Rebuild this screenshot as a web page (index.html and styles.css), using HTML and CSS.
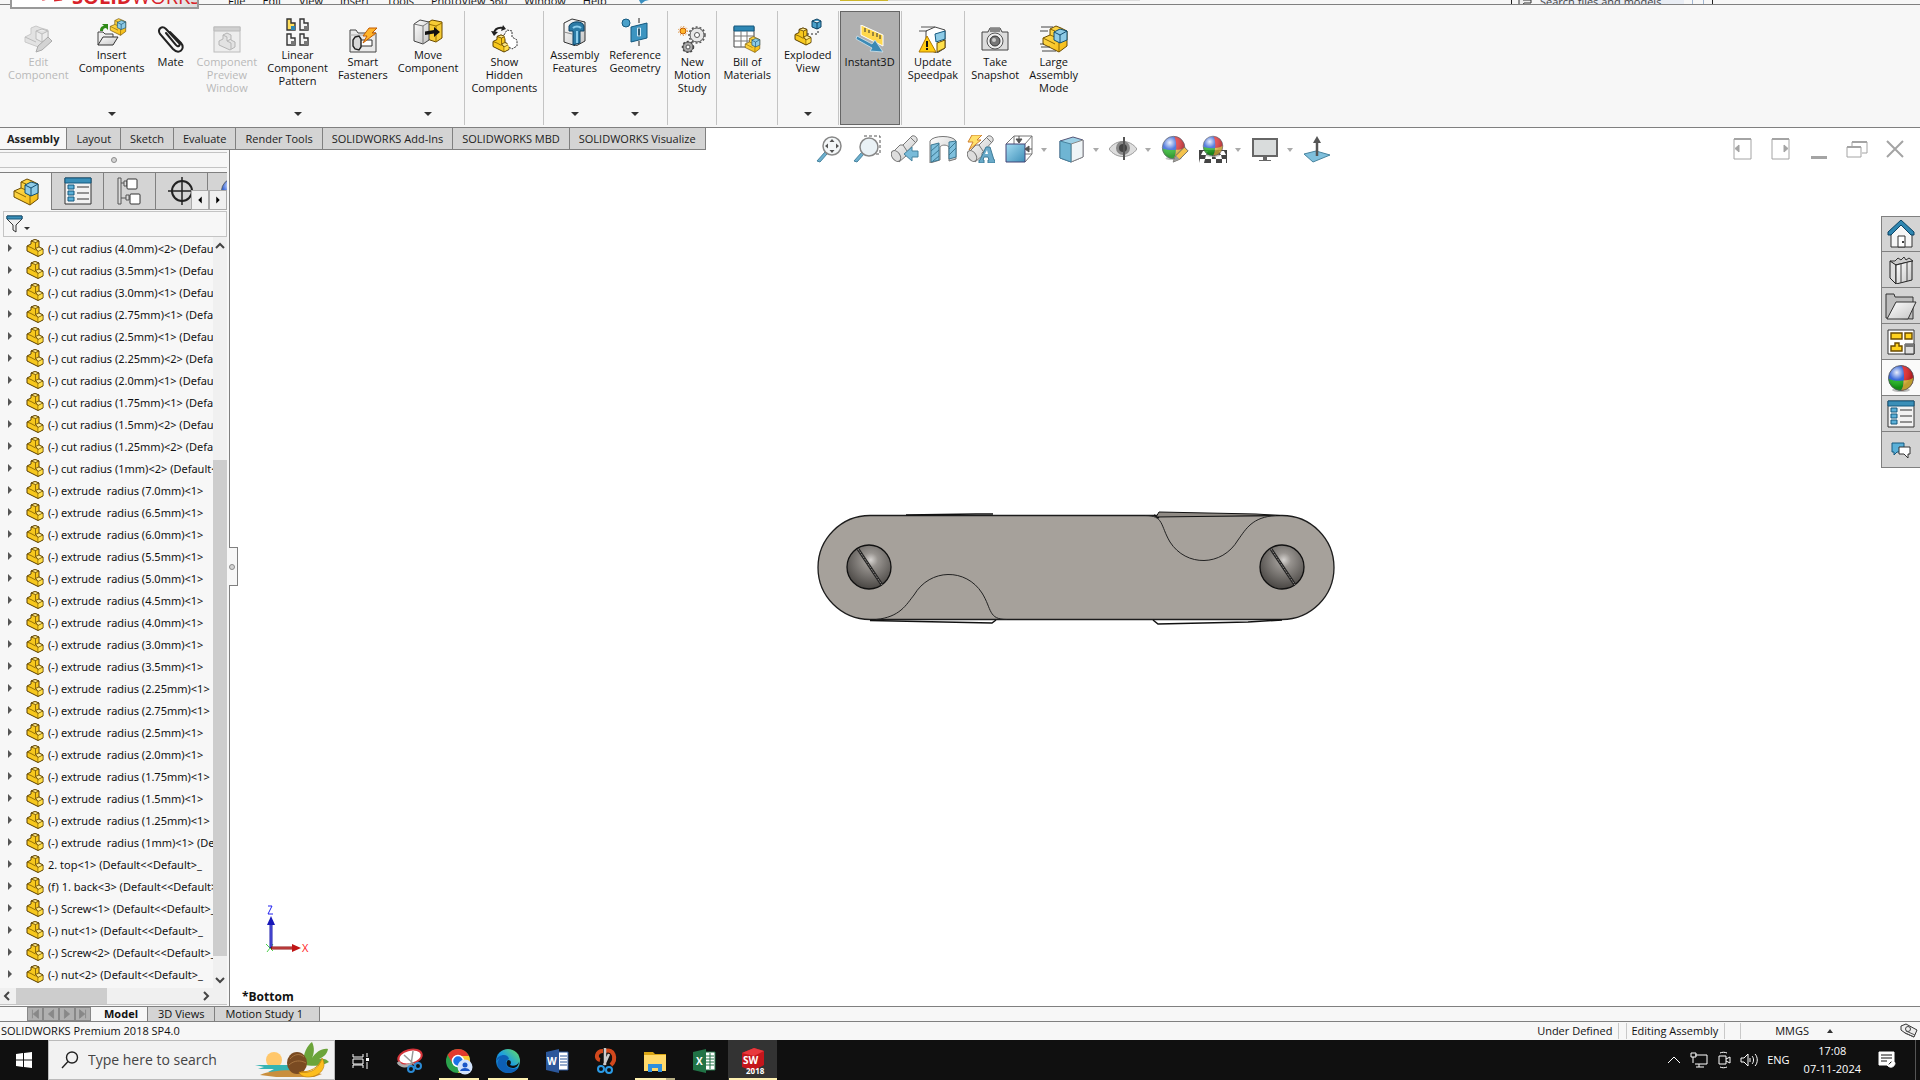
FILE: index.html
```html
<!DOCTYPE html>
<html lang="en">
<head>
<meta charset="utf-8">
<title>SOLIDWORKS Premium 2018</title>
<link rel="stylesheet" href="styles.css">
</head>
<body>
<svg class="defs" aria-hidden="true">
  <defs>
    <linearGradient id="gy" x1="0" y1="0" x2="1" y2="1"><stop offset="0" stop-color="#ffe05a"/><stop offset="1" stop-color="#f5b90f"/></linearGradient>
    <linearGradient id="gb" x1="0" y1="0" x2="1" y2="1"><stop offset="0" stop-color="#a5dcf2"/><stop offset="1" stop-color="#3d8fb8"/></linearGradient>
    <linearGradient id="gg" x1="0" y1="0" x2="1" y2="1"><stop offset="0" stop-color="#fff"/><stop offset="1" stop-color="#c4c4c4"/></linearGradient>
    <radialGradient id="gs" cx=".54" cy=".34" r=".65"><stop offset="0" stop-color="#d6d3d0"/><stop offset=".25" stop-color="#97938f"/><stop offset="1" stop-color="#4b4845"/></radialGradient>
    <radialGradient id="gl" cx=".33" cy=".28" r=".6"><stop offset="0" stop-color="#fff" stop-opacity=".9"/><stop offset=".5" stop-color="#fff" stop-opacity=".1"/><stop offset="1" stop-color="#000" stop-opacity=".2"/></radialGradient>
    <linearGradient id="ge" x1="0" y1="1" x2="1" y2="0"><stop offset="0" stop-color="#0c59a4"/><stop offset=".5" stop-color="#1b9de2"/><stop offset="1" stop-color="#6be35a"/></linearGradient>
  </defs>
  <symbol id="part" viewBox="0 0 18 18">
    <path d="M1 7l4-2V2l4-1.500L13 2v6l4 2v5l-5 2.500L1 12z" fill="#f7c81e" stroke="#5a3f00" stroke-linejoin="round"/>
    <path d="M5 2l4-1.500L13 2 9.500 3.500zM9.500 9.500L13 8l4 2-5 2.500z" fill="#ffe98a" stroke="#5a3f00" stroke-width=".8"/>
    <path d="M9.500 3.500v6L12 12.500v5M1 7l4 1.500L9.500 11" fill="none" stroke="#7a5800" stroke-width=".8"/>
    <path d="M12.500 12.800L16.500 10.800v3.800l-4 2z" fill="#ffdf4d"/>
  </symbol>
  <symbol id="asm" viewBox="0 0 28 28">
    <path d="M2 13l7-3V4l6-3 5 2 6 3v15l-8 6L2 19z" fill="url(#gy)" stroke="#6b4b00"/>
    <path d="M9 4l5 2v6l-5-2M2 13l12 6M18 17v10" fill="none" stroke="#8a6500"/>
    <path d="M13 7l6-3 7 2v9l-7 3-6-3z" fill="#8ecbe6" stroke="#124e70"/>
    <path d="M13 7l6 3 7-4M19 10v8" fill="none" stroke="#124e70"/>
  </symbol>
  <symbol id="edit" viewBox="0 0 28 28">
    <path d="M1 12l6-3V3l5-2 5 2 7 2v12l-7 6L1 17z" fill="#e2e2e2" stroke="#c9c9c9"/>
    <path d="M12 6l6-2 6 2v8l-6 3-6-3zM12 6l6 3 6-3M18 9v8M1 12l11 5" fill="#ececec" stroke="#bcbcbc"/>
    <path d="M12 27l2-6 10-9 4 4-10 9z" fill="#d3d3d3" stroke="#aaa"/>
  </symbol>
  <symbol id="insert" viewBox="0 0 30 28">
    <path d="M1 27V14h5l2 2h8v3" fill="#eee" stroke="#444"/><path d="M1 27l5-8h15l-5 8z" fill="url(#gg)" stroke="#333"/>
    <path d="M3 13c0-4 2-5 4-5L5 6h6v6L9 10c-2 0-3 1-3 3z" fill="#2f8a18"/>
    <use href="#asm" x="12" y="0" width="18" height="18"/>
  </symbol>
  <symbol id="clip" viewBox="0 0 28 28">
    <path d="M9 8l10 12c2 3 5 0 3-2L9 4C5 0 0 4 3 9l13 15c6 6 13 0 8-6L13 7" fill="none" stroke="#222" stroke-width="2" stroke-linecap="round"/>
  </symbol>
  <symbol id="preview" viewBox="0 0 28 28">
    <rect x="1" y="2" width="26" height="25" fill="#ededed" stroke="#bcbcbc"/><path d="M1 2h26v4H1z" fill="#d0d0d0" stroke="#bcbcbc"/>
    <path d="M6 16l4-2v-4l4-2 4 2v5l4 2v5l-5 3-11-5zM10 10l4 2v4l4-2M14 16l4 2v6" fill="#e2e2e2" stroke="#b5b5b5"/>
  </symbol>
  <symbol id="pattern" viewBox="0 0 28 28">
    <g stroke="#333" stroke-width="1.400"><path d="M3 1h4v4h4v7H3z" fill="#ffdf5e"/><path d="M16 1h4v4h4v7h-8zM3 16h4v4h4v7H3zM16 16h4v4h4v7h-8z" fill="#f4f4f4"/></g>
    <path d="M7 8h4v4H7z" fill="#2e87b4"/><path d="M20 8h4v4h-4zM7 23h4v4H7zM20 23h4v4h-4z" fill="#777"/>
  </symbol>
  <symbol id="smart" viewBox="0 0 28 28">
    <path d="M1 27V5h6l2 3h18v19z" fill="#e9e9e9" stroke="#444"/><path d="M1 10h26" stroke="#aaa"/>
    <path d="M9 15h14v6H9z" fill="#fff" stroke="#333"/><path d="M6 12l4-1 2 3v8l-2 3-4-1-2-3v-6z" fill="#d8d8d8" stroke="#222" stroke-width="1.400"/>
    <path d="M20 3h8l-5 5h4L14 18l4-7h-4z" fill="#ffb52a" stroke="#c35a00"/>
  </symbol>
  <symbol id="move" viewBox="0 0 28 28">
    <path d="M13 5l5-3 10 2v16l-6 4-9-3z" fill="#f6cc35" stroke="#6b4b00"/><path d="M14 6l8 2 6-3M22 8v16" fill="none" stroke="#9a7300"/>
    <path d="M0 6l6-4 9 2v18l-6 4-9-3z" fill="url(#gg)" stroke="#444"/><path d="M0 6l9 2 6-4M9 8v18" fill="none" stroke="#777"/>
    <path d="M11 13.500l9-1.500V9l6 5-6 5v-3.500l-9 1.500z" fill="#111"/>
  </symbol>
  <symbol id="hidden" viewBox="0 0 28 28">
    <use href="#part" x="2" y="9" width="18" height="19"/>
    <path d="M14 10l3-5 5 1v6l5 3v6l-5 3-3-2" fill="#fff" stroke="#333" stroke-dasharray="2 1"/>
    <path d="M4 8c1-5 5-6 10-5" fill="none" stroke="#222" stroke-width="2"/><path d="M1 6l7 1-4 4zM13 0l3 4-5 2z" fill="#222"/>
  </symbol>
  <symbol id="feature" viewBox="0 0 28 28">
    <path d="M3 5l8-4 13 3v19l-9 5-12-4z" fill="url(#gg)" stroke="#333"/>
    <path d="M8 8c3-6 14-5 15 0v5h-4v12l-7 2V13H8z" fill="#2c7ba6" stroke="#0c4364"/><path d="M12 10c2-2 6-2 8 0M16 13v12" stroke="#8bcdec" fill="none" stroke-width="2"/><path d="M3 14l8 2" stroke="#888"/>
  </symbol>
  <symbol id="refgeo" viewBox="0 0 28 28">
    <circle cx="5" cy="5" r="4" fill="#4aa0c9" stroke="#14597f"/><path d="M10 9l16-4v15l-16 4z" fill="#3c94c0" stroke="#14597f"/>
    <path d="M18 0v5M18 9v10M18 23v5" stroke="#222"/><path d="M16.500 10h3v8h-3z" fill="none" stroke="#cceafa"/>
  </symbol>
  <symbol id="motion" viewBox="0 0 28 28">
    <circle cx="5" cy="6" r="3" fill="#ffb52a" stroke="#c35a00"/><circle cx="5" cy="6" r="4.500" fill="none" stroke="#d97a10" stroke-dasharray="1 2"/>
    <g fill="#e6e6e6" stroke="#555"><circle cx="19" cy="10" r="7"/><circle cx="19" cy="10" r="2.500" fill="#fff"/><circle cx="10" cy="22" r="5" fill="#aaa"/><circle cx="10" cy="22" r="2" fill="#fff"/></g>
    <circle cx="19" cy="10" r="8" fill="none" stroke="#555" stroke-width="1.500" stroke-dasharray="2 2"/><circle cx="10" cy="22" r="5.500" fill="none" stroke="#444" stroke-width="1.500" stroke-dasharray="2 2"/>
  </symbol>
  <symbol id="bom" viewBox="0 0 28 28">
    <path d="M1 2h20v20H1z" fill="#fff" stroke="#444"/><path d="M1 1h20v5H1z" fill="#2e87b4" stroke="#14597f"/><path d="M1 11h20M1 16h20M8 6v16M14 6v16" stroke="#777"/>
    <use href="#asm" x="11" y="11" width="17" height="17"/>
  </symbol>
  <symbol id="explode" viewBox="0 0 28 28">
    <use href="#part" x="0" y="9" width="18" height="19"/><path d="M13 16h11V9" fill="none" stroke="#222" stroke-dasharray="2 2"/>
    <path d="M18 3l5-2 4 2v6l-4 2-5-2zM18 3l5 2 4-2M23 5v6" fill="#4aa0c9" stroke="#0c4364"/>
  </symbol>
  <symbol id="instant" viewBox="0 0 28 28">
    <path d="M5 0l22 10v11L5 10z" fill="#ffd84c" stroke="#fff"/><path d="M9 3v4M13 5v3M17 7v4M21 8v4M24 10v4" stroke="#333"/>
    <path d="M1 11l15 8 3-4 8 12-13-1 2-3L0 14z" fill="#3c8ab5" stroke="#cfe4ef" stroke-width=".8"/>
  </symbol>
  <symbol id="speed" viewBox="0 0 28 28">
    <path d="M7 6l9-4 10 3v18l-8 5-11-4z" fill="#fff" stroke="#444"/><path d="M16 9l10-3v8l-9 3z" fill="#8ecbe6" stroke="#14597f"/><path d="M18 18l8-3v8l-8 4z" fill="#ffe04a" stroke="#6b4b00"/>
    <path d="M2 2h14M0 6h8" stroke="#555"/><path d="M8 11l9 16H0z" fill="#ffcc10" stroke="#b07800"/><path d="M8 16v6M8 23v2" stroke="#111" stroke-width="2"/>
  </symbol>
  <symbol id="camera" viewBox="0 0 28 28">
    <path d="M1 7h6l2-4h10l2 4h6v18H1z" fill="#ddd" stroke="#444" stroke-linejoin="round"/><path d="M9 3h10v4H9z" fill="#888"/>
    <circle cx="14" cy="16" r="8" fill="#eee" stroke="#555"/><circle cx="14" cy="16" r="5" fill="#777" stroke="#333"/><circle cx="13" cy="15" r="2" fill="#ccc"/>
  </symbol>
  <symbol id="large" viewBox="0 0 28 28">
    <use href="#asm" x="1" y="0" width="28" height="28"/><path d="M1 2h12M0 6h8M0 19h4M1 22h9M2 26h14" stroke="#444"/>
  </symbol>
  <symbol id="zoomfit" viewBox="0 0 28 28">
    <path d="M2 26l8-9 2 2-7 8z" fill="#6db1d0" stroke="#47839e"/><circle cx="17" cy="11" r="9" fill="#f4f7f8" stroke="#888" stroke-width="1.500"/><path d="M17 4l2.500 3h-5zM17 18l2.500-3h-5zM10 11l3-2.500v5zM24 11l-3-2.500v5z" fill="#555"/>
  </symbol>
  <symbol id="zoomarea" viewBox="0 0 28 28">
    <path d="M11 1h16v18h-8" fill="none" stroke="#555" stroke-dasharray="3 2"/><path d="M1 26l8-9 2 2-7 8z" fill="#6db1d0" stroke="#47839e"/><circle cx="16" cy="12" r="9" fill="#eaf2f6" stroke="#888" stroke-width="1.500"/>
  </symbol>
  <symbol id="scope" viewBox="0 0 28 28"><path d="M1 18l8-8 3 0 9-9c3-1 6 2 5 5L15 18v3l-7 6z" fill="url(#gg)" stroke="#777"/><ellipse cx="5" cy="21" rx="4" ry="6" fill="#ddd" stroke="#777" transform="rotate(-35 5 21)"/><path d="M12 10l4 6M20 3l5 5" stroke="#777"/></symbol>
  <symbol id="prev" viewBox="0 0 28 28"><use href="#scope"/><path d="M27 16v6h-6v4l-8-7 8-7v4z" fill="#79bbd9" stroke="#47839e"/></symbol>
  <symbol id="section" viewBox="0 0 28 28">
    <path d="M1 6c3-6 23-6 26 0v18l-7 2V12c-3-3-8-2-9 0v13l-10 3z" fill="url(#gg)" stroke="#777"/><path d="M2 10l8-2v17l-8 2zM20 7l7-1v16l-7 2z" fill="#7fc0dd" stroke="#3c7893"/><path d="M2 16l8-7M2 22l8-7M4 26l6-5M20 14l7-7M20 20l7-7" stroke="#3c7893"/>
  </symbol>
  <symbol id="anno" viewBox="0 0 28 28"><use href="#scope"/><path d="M5 0h10l-5 5h4L2 15l4-8H1z" fill="#ffe06a" stroke="#d08030"/><path d="M19 12h4l4 13h1v3h-7v-3h1l-1-3h-4l-1 3h1v3h-5v-3h1z" fill="#69aac9" stroke="#3f7c98"/><path d="M20 15l1 4h-3z" fill="#fff"/></symbol>
  <symbol id="orient" viewBox="0 0 28 28"><path d="M1 9l8-8h18v18l-7 8M9 1v8M27 1l-7 8M20 19h7" fill="none" stroke="#777"/><path d="M1 9h19v18H1z" fill="url(#gb)" stroke="#447"/><path d="M14 1v6M11 4l3 4 3-4zM27 14h-5M24 11l-4 3 4 3z" stroke="#555" fill="#555"/></symbol>
  <symbol id="cube" viewBox="0 0 28 28"><path d="M3 6l13-4 10 3v17l-12 5-11-4z" fill="#9cd0e6" stroke="#557"/><path d="M14 9l12-4v17l-12 5z" fill="#eef4f7" stroke="#888"/><path d="M3 6l11 3v18l-11-4z" fill="#6fb5d3" stroke="#47839e"/></symbol>
  <symbol id="eye" viewBox="0 0 28 28"><path d="M0 14C7 4 21 4 28 14 21 24 7 24 0 14z" fill="#ddd" stroke="#999"/><circle cx="14" cy="13" r="7" fill="#888"/><circle cx="14" cy="13" r="4" fill="#444"/><path d="M15 2v23" stroke="#555" stroke-width="2"/></symbol>
  <symbol id="ball" viewBox="0 0 28 28"><ellipse cx="14" cy="26" rx="9" ry="2" fill="#bbb"/><circle cx="14" cy="14" r="12.500" fill="#2458d6"/><path d="M14 1.500c4 2 4 22 0 25A12.500 12.500 0 0 0 26.500 14 12.500 12.500 0 0 0 14 1.500z" fill="#e0262a"/><path d="M1.500 15c6 2 10 2 15 1.500 0 5-1 8-3 10C7 26 2 22 1.500 15z" fill="#18b118"/><path d="M16.500 16.500c4 0 8-1 10-3 0 7-5 13-12.500 13 2-3 2.500-6 2.500-10z" fill="#eec43a"/><circle cx="14" cy="14" r="12.500" fill="url(#gl)" stroke="#555" stroke-width=".8"/></symbol>
  <symbol id="appear" viewBox="0 0 30 30"><use href="#ball" width="27" height="27" opacity=".85"/><path d="M13 29l3-7 9-9 4 4-9 9z" fill="#f4c34d" stroke="#666"/><path d="M13 29l3-7 4 4z" fill="#999"/></symbol>
  <symbol id="scene" viewBox="0 0 28 28"><path d="M0 15h28v13H0z" fill="#444"/><path d="M4 16h5l-2 4H2zM20 16h5l2 4h-5zM7 20h6v4H6zM16 20h6l1 4h-6zM1 24h5l-1 4H0zM12 24h5v4h-5zM23 24h4v4h-4z" fill="#fff"/><use href="#ball" x="3" y="0" width="22" height="22" opacity=".85"/></symbol>
  <symbol id="monitor" viewBox="0 0 28 28"><path d="M2 4h24v17H2z" fill="#d9dcdc" stroke="#666" stroke-width="2"/><path d="M12 21h4v4h4v1H8v-1h4z" fill="#666"/></symbol>
  <symbol id="normal" viewBox="0 0 28 28"><path d="M1 19l12-3 14 4-17 7z" fill="#7fc0dd" stroke="#47839e"/><path d="M14 21V7" stroke="#555" stroke-width="2.500"/><path d="M14 1l4 7h-8z" fill="#555"/></symbol>
  <symbol id="list" viewBox="0 0 28 28"><path d="M1 1h26v26H1z" fill="#f2f2f2" stroke="#333"/><path d="M1 1h26v5H1z" fill="#3a8fb8" stroke="#14597f"/><path d="M4 8h6v4H4zM4 14h6v4H4zM4 20h6v4H4z" fill="#5ab0d8" stroke="#14597f"/><path d="M13 10h12M13 16h12M13 22h12" stroke="#333"/></symbol>
  <symbol id="config" viewBox="0 0 28 28"><path d="M2 1h3v26H2zM5 6h6M5 21h8" fill="#ddd" stroke="#555"/><path d="M8 4h3v5H8zM10 18h3v5h-3z" fill="#ddd" stroke="#555"/><rect x="11" y="2" width="10" height="10" rx="1" fill="#fff" stroke="#333"/><rect x="14" y="17" width="10" height="10" rx="1" fill="#fff" stroke="#333"/></symbol>
  <symbol id="target" viewBox="0 0 28 28"><circle cx="14" cy="14" r="10" fill="none" stroke="#222" stroke-width="2"/><path d="M14 0v28M0 14h28" stroke="#222" stroke-width="1.500"/></symbol>
  <symbol id="house" viewBox="0 0 28 28"><path d="M4 13L14 4l11 9v14H4z" fill="#f6f6f6" stroke="#333"/><path d="M11 16h7v11h-7z" fill="#fff" stroke="#333"/><path d="M1 15v-3L14 0l13 12v3h-3L14 5 4 15z" fill="#2f86b0" stroke="#0c4364"/><circle cx="16" cy="22" r="1"/></symbol>
  <symbol id="books" viewBox="0 0 28 28"><path d="M3 5l5 4 18-4-4-3-3 2-2-3-3 3-3-2-3 3z" fill="#ccc" stroke="#333"/><path d="M3 5l6 4v19l-6-6z" fill="#ddd" stroke="#222"/><path d="M9 9l16-4v19L9 28z" fill="url(#gg)" stroke="#222"/><path d="M14 8v19M20 6v19" stroke="#444"/></symbol>
  <symbol id="folder" viewBox="0 0 32 28"><path d="M1 26V2h8l1 3h18v22z" fill="#bdbdbd" stroke="#333"/><path d="M2 27l9-17h20l-8 17z" fill="url(#gg)" stroke="#333"/></symbol>
  <symbol id="palette" viewBox="0 0 28 28"><path d="M1 2h26v24H1z" fill="#fff" stroke="#333"/><path d="M4 5h11v6H4zM18 5h7v6h-7zM4 23v-5h4v-3h4v3h3v5z" fill="#ffd21f" stroke="#6b4b00" stroke-width="1.400"/><path d="M18 16h9v10h-9z" fill="#ddd" stroke="#333"/><path d="M18 16h9v3h-9z" fill="#777"/></symbol>
  <symbol id="chat" viewBox="0 0 28 28"><path d="M5 7h12v9h-7l-3 3v-3H5z" fill="#5ab0d8" stroke="#14597f"/><path d="M12 11h11v7h-2v4l-4-4h-5z" fill="#fff" stroke="#333"/></symbol>
  <symbol id="snip" viewBox="0 0 28 28"><ellipse cx="14" cy="10" rx="12" ry="7" fill="#fff" stroke="#d6343a" stroke-width="2" transform="rotate(-15 14 10)"/><path d="M2 15c3 5 9 5 13 2" fill="none" stroke="#aaa" stroke-width="3"/><path d="M8 8l11 10M17 4l-2 14" stroke="#999" stroke-width="1.500"/><circle cx="15" cy="22" r="3" fill="none" stroke="#2b8bd6" stroke-width="2"/><circle cx="22" cy="19" r="3" fill="none" stroke="#2b8bd6" stroke-width="2"/></symbol>
</svg>

<header class="topbar">
  <div class="brand"><svg width="24" height="12" viewBox="0 0 24 12"><path d="M0 6c4 0 7-2 8-6M12 0c8 2 8 6 0 7l8-1" fill="none" stroke="#d8232a" stroke-width="3"/></svg><span><b>SOLID</b>WORKS</span></div>
  <nav class="menu"><a href="#">File</a><a href="#">Edit</a><a href="#">View</a><a href="#">Insert</a><a href="#">Tools</a><a href="#">PhotoView 360</a><a href="#">Window</a><a href="#">Help</a><svg width="12" height="10" viewBox="0 0 12 10"><path d="M1 6h10L7 7l-4 3z" fill="#3a8fc0"/></svg></nav>
  <div class="progress"><i></i></div>
  <div class="filesearch"><svg width="14" height="8" viewBox="0 0 14 8"><path d="M1 0v7h3l2-3h7V1H5" fill="#eee" stroke="#333"/></svg><input aria-label="Search files and models" placeholder="Search files and models"><i></i></div>
</header>

<section class="ribbon" aria-label="Assembly commands">
  <button class="cmd off" disabled><svg><use href="#edit"/></svg><span>Edit<br>Component</span></button>
  <button class="cmd drop"><svg><use href="#insert"/></svg><span>Insert<br>Components</span></button>
  <button class="cmd"><svg><use href="#clip"/></svg><span>Mate</span></button>
  <button class="cmd off" disabled><svg><use href="#preview"/></svg><span>Component<br>Preview<br>Window</span></button>
  <button class="cmd drop"><svg><use href="#pattern"/></svg><span>Linear<br>Component<br>Pattern</span></button>
  <button class="cmd"><svg><use href="#smart"/></svg><span>Smart<br>Fasteners</span></button>
  <button class="cmd drop"><svg><use href="#move"/></svg><span>Move<br>Component</span></button>
  <i class="sep"></i>
  <button class="cmd"><svg><use href="#hidden"/></svg><span>Show<br>Hidden<br>Components</span></button>
  <i class="sep"></i>
  <button class="cmd drop"><svg><use href="#feature"/></svg><span>Assembly<br>Features</span></button>
  <button class="cmd drop"><svg><use href="#refgeo"/></svg><span>Reference<br>Geometry</span></button>
  <i class="sep"></i>
  <button class="cmd"><svg><use href="#motion"/></svg><span>New<br>Motion<br>Study</span></button>
  <i class="sep"></i>
  <button class="cmd"><svg><use href="#bom"/></svg><span>Bill of<br>Materials</span></button>
  <i class="sep"></i>
  <button class="cmd drop"><svg><use href="#explode"/></svg><span>Exploded<br>View</span></button>
  <i class="sep"></i>
  <button class="cmd on" aria-pressed="true"><svg><use href="#instant"/></svg><span>Instant3D</span></button>
  <i class="sep"></i>
  <button class="cmd"><svg><use href="#speed"/></svg><span>Update<br>Speedpak</span></button>
  <i class="sep"></i>
  <button class="cmd"><svg><use href="#camera"/></svg><span>Take<br>Snapshot</span></button>
  <button class="cmd"><svg><use href="#large"/></svg><span>Large<br>Assembly<br>Mode</span></button>
</section>

<main class="work">
  <nav class="tabs"><a class="cur" href="#">Assembly</a><a href="#">Layout</a><a href="#">Sketch</a><a href="#">Evaluate</a><a href="#">Render Tools</a><a href="#">SOLIDWORKS Add-Ins</a><a href="#">SOLIDWORKS MBD</a><a href="#">SOLIDWORKS Visualize</a></nav>

  <aside class="panel">
    <div class="grip"><i class="dot"></i></div>
    <div class="ptabs">
      <button class="cur" aria-label="Feature tree"><svg><use href="#asm"/></svg></button><button aria-label="Properties"><svg><use href="#list"/></svg></button><button aria-label="Configurations"><svg><use href="#config"/></svg></button><button aria-label="Dimensions"><svg><use href="#target"/></svg></button><button aria-label="Display"><svg><use href="#ball"/></svg></button>
      <div class="pscroll"><button aria-label="Previous tab"><svg viewBox="0 0 18 18"><path d="M11 5v8L7 9z"/></svg></button><button aria-label="Next tab"><svg viewBox="0 0 18 18"><path d="M7 5v8l4-4z"/></svg></button></div>
    </div>
    <button class="filter" aria-label="Filter tree"><svg width="24" height="18" viewBox="0 0 24 18"><path d="M1 1h15v3l-6 6v7l-3-2v-5L1 4z" fill="#eee" stroke="#333"/><path d="M1 1h15v3H1z" fill="#3a8fb8" stroke="#14597f"/><path d="M18 12h6l-3 3z" fill="#333"/></svg></button>
    <div class="treebox">
      <ul class="tree">
        <li><svg><use href="#part"/></svg>(-) cut radius (4.0mm)&lt;2&gt; (Default&lt;&lt;Default&gt;_</li>
        <li><svg><use href="#part"/></svg>(-) cut radius (3.5mm)&lt;1&gt; (Default&lt;&lt;Default&gt;_</li>
        <li><svg><use href="#part"/></svg>(-) cut radius (3.0mm)&lt;1&gt; (Default&lt;&lt;Default&gt;_</li>
        <li><svg><use href="#part"/></svg>(-) cut radius (2.75mm)&lt;1&gt; (Default&lt;&lt;Default&gt;_</li>
        <li><svg><use href="#part"/></svg>(-) cut radius (2.5mm)&lt;1&gt; (Default&lt;&lt;Default&gt;_</li>
        <li><svg><use href="#part"/></svg>(-) cut radius (2.25mm)&lt;2&gt; (Default&lt;&lt;Default&gt;_</li>
        <li><svg><use href="#part"/></svg>(-) cut radius (2.0mm)&lt;1&gt; (Default&lt;&lt;Default&gt;_</li>
        <li><svg><use href="#part"/></svg>(-) cut radius (1.75mm)&lt;1&gt; (Default&lt;&lt;Default&gt;_</li>
        <li><svg><use href="#part"/></svg>(-) cut radius (1.5mm)&lt;2&gt; (Default&lt;&lt;Default&gt;_</li>
        <li><svg><use href="#part"/></svg>(-) cut radius (1.25mm)&lt;2&gt; (Default&lt;&lt;Default&gt;_</li>
        <li><svg><use href="#part"/></svg>(-) cut radius (1mm)&lt;2&gt; (Default&lt;&lt;Default&gt;_</li>
        <li><svg><use href="#part"/></svg>(-) extrude  radius (7.0mm)&lt;1&gt;</li>
        <li><svg><use href="#part"/></svg>(-) extrude  radius (6.5mm)&lt;1&gt;</li>
        <li><svg><use href="#part"/></svg>(-) extrude  radius (6.0mm)&lt;1&gt;</li>
        <li><svg><use href="#part"/></svg>(-) extrude  radius (5.5mm)&lt;1&gt;</li>
        <li><svg><use href="#part"/></svg>(-) extrude  radius (5.0mm)&lt;1&gt;</li>
        <li><svg><use href="#part"/></svg>(-) extrude  radius (4.5mm)&lt;1&gt;</li>
        <li><svg><use href="#part"/></svg>(-) extrude  radius (4.0mm)&lt;1&gt;</li>
        <li><svg><use href="#part"/></svg>(-) extrude  radius (3.0mm)&lt;1&gt;</li>
        <li><svg><use href="#part"/></svg>(-) extrude  radius (3.5mm)&lt;1&gt;</li>
        <li><svg><use href="#part"/></svg>(-) extrude  radius (2.25mm)&lt;1&gt;</li>
        <li><svg><use href="#part"/></svg>(-) extrude  radius (2.75mm)&lt;1&gt;</li>
        <li><svg><use href="#part"/></svg>(-) extrude  radius (2.5mm)&lt;1&gt;</li>
        <li><svg><use href="#part"/></svg>(-) extrude  radius (2.0mm)&lt;1&gt;</li>
        <li><svg><use href="#part"/></svg>(-) extrude  radius (1.75mm)&lt;1&gt;</li>
        <li><svg><use href="#part"/></svg>(-) extrude  radius (1.5mm)&lt;1&gt;</li>
        <li><svg><use href="#part"/></svg>(-) extrude  radius (1.25mm)&lt;1&gt;</li>
        <li><svg><use href="#part"/></svg>(-) extrude  radius (1mm)&lt;1&gt; (Default</li>
        <li><svg><use href="#part"/></svg>2. top&lt;1&gt; (Default&lt;&lt;Default&gt;_</li>
        <li><svg><use href="#part"/></svg>(f) 1. back&lt;3&gt; (Default&lt;&lt;Default&gt;_</li>
        <li><svg><use href="#part"/></svg>(-) Screw&lt;1&gt; (Default&lt;&lt;Default&gt;_</li>
        <li><svg><use href="#part"/></svg>(-) nut&lt;1&gt; (Default&lt;&lt;Default&gt;_</li>
        <li><svg><use href="#part"/></svg>(-) Screw&lt;2&gt; (Default&lt;&lt;Default&gt;_</li>
        <li><svg><use href="#part"/></svg>(-) nut&lt;2&gt; (Default&lt;&lt;Default&gt;_</li>
      </ul>
      <div class="vbar"><svg viewBox="0 0 14 16"><path d="M3 11l4-4 4 4" /></svg><i class="before"></i><i class="thumb"></i><i class="after"></i><svg viewBox="0 0 14 16"><path d="M3 6l4 4 4-4"/></svg></div>
    </div>
    <div class="hbar"><svg viewBox="0 0 16 16"><path d="M9 4L5 8l4 4"/></svg><i class="thumb"></i><svg class="end" viewBox="0 0 16 16"><path d="M7 4l4 4-4 4"/></svg></div>
  </aside>

  <section class="view" aria-label="Graphics area">
    <svg class="model" width="520" height="112" viewBox="0 0 520 112">
      <path d="M54 4.500H466a52 52 0 0 1 0 104H54a52 52 0 0 1 0-104z" fill="#a6a19b" stroke="#1c1c1c" stroke-width="1.300"/>
      <path d="M90 4l70-1h17M338 4l5 3M54 109.500l122 2.500 4-3M337 109l5 4 90-2 34-2" fill="none" stroke="#111" stroke-width="1.500"/><path d="M340 6l3-5L440 3l24 1.500z" fill="#8f8a84" stroke="#111"/>
      <path d="M60 108.500C84 106 90 94 98 84c16-27 52-27 68-2 10 16 6 26.500 25 26.500M329 4.500c19 0 15 9.500 25 26.500 16 25 52 25 68-2C430 18 436 6 460 4.500" fill="none" stroke="#222"/>
      <g id="screw"><circle cx="53" cy="56" r="22" fill="url(#gs)" stroke="#111" stroke-width="1.300"/><path d="M42 38l24 36" stroke="#222" stroke-width="3"/><path d="M42 38l24 36" stroke="#8a8683" stroke-dasharray="2 1"/></g>
      <use href="#screw" x="413"/>
    </svg>

    <div class="headsup">
      <button aria-label="Zoom to fit"><svg><use href="#zoomfit"/></svg></button><button aria-label="Zoom to area"><svg><use href="#zoomarea"/></svg></button><button aria-label="Previous view"><svg><use href="#prev"/></svg></button><button aria-label="Section view"><svg><use href="#section"/></svg></button><button aria-label="Annotation views"><svg><use href="#anno"/></svg></button><button class="more" aria-label="View orientation"><svg><use href="#orient"/></svg></button><button class="more" aria-label="Display style"><svg><use href="#cube"/></svg></button><button class="more" aria-label="Hide or show items"><svg><use href="#eye"/></svg></button><button aria-label="Edit appearance"><svg><use href="#appear"/></svg></button><button class="more" aria-label="Apply scene"><svg><use href="#scene"/></svg></button><button class="more" aria-label="View settings"><svg><use href="#monitor"/></svg></button><button aria-label="Normal to"><svg><use href="#normal"/></svg></button>
    </div>

    <div class="winctl">
      <button aria-label="Collapse left"><svg viewBox="0 0 22 24"><path d="M2 2h17v20H2z"/><path d="M2 2h17" stroke-width="2"/><path d="M7 8v7l-4-3.500z" fill="#a4a4a4"/></svg></button>
      <button aria-label="Collapse right"><svg viewBox="0 0 22 24"><path d="M2 2h17v20H2z"/><path d="M2 2h17" stroke-width="2"/><path d="M14 8v7l4-3.500z" fill="#a4a4a4"/></svg></button>
      <button aria-label="Minimize"><svg viewBox="0 0 22 24"><path d="M3 20.500h16" stroke-width="3"/></svg></button>
      <button aria-label="Restore"><svg viewBox="0 0 22 24"><path d="M1 10h14v10H1zM6 9V5h15v11h-5" /><path d="M1 10h14M6 5h15" stroke-width="2"/></svg></button>
      <button aria-label="Close"><svg viewBox="0 0 22 24"><path d="M3 4l16 16M19 4L3 20" stroke-width="2"/></svg></button>
    </div>

    <div class="taskpane">
      <button aria-label="Resources"><svg><use href="#house"/></svg></button><button aria-label="Design library"><svg><use href="#books"/></svg></button><button aria-label="File explorer"><svg class="wide"><use href="#folder"/></svg></button><button aria-label="View palette"><svg><use href="#palette"/></svg></button><button class="cur" aria-label="Appearances"><svg><use href="#ball"/></svg></button><button aria-label="Custom properties"><svg><use href="#list"/></svg></button><button aria-label="Forum"><svg><use href="#chat"/></svg></button>
    </div>

    <button class="splitter" aria-label="Hide tree"><i class="dot"></i></button>

    <div class="corner">
      <svg width="60" height="50" viewBox="0 0 60 50"><path d="M24 39l7 7M31 39l-6 8" stroke="#4bd04b"/><path d="M29 43V15" stroke="#1818a8" stroke-width="3"/><path d="M29 42V16" stroke="#6a6af0"/><path d="M29 11l4 9h-8z" fill="#1818b8"/><path d="M29 43h22" stroke="#8e1010" stroke-width="3"/><path d="M30 43h20" stroke="#e06060"/><path d="M59 43l-9-4v8z" fill="#c01515"/><path d="M26 1h4l-4 8h5" fill="none" stroke="#2020f0"/></svg><span class="xaxis">X</span>
      <b>*Bottom</b>
    </div>
  </section>
</main>

<nav class="sheets">
  <div class="steps"><button aria-label="First"><svg viewBox="0 0 16 14"><path d="M12 2v10L6 7zM5 2v10"/></svg></button><button aria-label="Previous"><svg viewBox="0 0 16 14"><path d="M11 2v10L5 7z"/></svg></button><button aria-label="Next"><svg viewBox="0 0 16 14"><path d="M5 2v10l6-5z"/></svg></button><button aria-label="Last"><svg viewBox="0 0 16 14"><path d="M4 2v10l6-5zM11 2v10"/></svg></button></div>
  <a class="cur" href="#">Model</a><a href="#">3D Views</a><a href="#">Motion Study 1</a>
</nav>

<footer class="status">
  <span>SOLIDWORKS Premium 2018 SP4.0</span>
  <span class="defined">Under Defined</span><span class="blank narrow"></span><span class="editing">Editing Assembly</span><span class="blank"></span>
  <button class="units">MMGS <svg width="6" height="4" viewBox="0 0 6 4"><path d="M0 4h6L3 0z" fill="#333"/></svg></button>
  <svg width="18" height="16" viewBox="0 0 18 16"><path d="M1 3l5-2 11 6-3 7-9-4-4-3z" fill="#eee" stroke="#333"/><circle cx="8" cy="6" r="2.500" fill="none" stroke="#444"/><path d="M5 10l9 4M6 8l9 4" stroke="#555"/></svg>
</footer>

<div class="taskbar">
  <button class="start" aria-label="Start"><svg width="16" height="16" viewBox="0 0 16 16"><path d="M0 2l7-1v6.500H0zM8 1l8-1v7.500H8zM0 8.500h7V15l-7-1zM8 8.500h8V16l-8-1z" fill="#fff"/></svg></button>
  <label class="find"><svg width="18" height="18" viewBox="0 0 18 18"><circle cx="11" cy="6.500" r="5.500" fill="none" stroke="#222" stroke-width="1.400"/><path d="M7 10.500L1 17" stroke="#222" stroke-width="1.400"/></svg><input placeholder="Type here to search" aria-label="Type here to search">
    <svg width="76" height="38" viewBox="0 0 76 38"><circle cx="20" cy="19" r="8" fill="#ffc76b"/><path d="M1 24h46l4 4-10 3H14l6-3H4l6-2z" fill="#35b4b4"/><path d="M6 34c14-6 40-6 62-1l-8 3H22z" fill="#c98f3d"/><path d="M50 24C48 12 54 4 58 1c3 6 2 12 0 16 4-6 10-10 16-9-1 6-5 8-9 10 4-1 8 0 10 3-8 5-18 4-25 3z" fill="#6ba43a"/><ellipse cx="43" cy="22" rx="10" ry="11" fill="#7a4b22"/><path d="M36 18c4-5 10-6 14-2M35 24c5-5 12-5 17-2" stroke="#a67440" fill="none"/><path d="M45 31c12 2 20-3 23-14 6 9-2 19-14 19-5 0-8-2-9-5z" fill="#fdbe1e" stroke="#b97a08" stroke-width=".6"/><path d="M47 31c10 0 17-5 20-11" stroke="#d9950c" fill="none"/></svg>
  </label>
  <div class="apps">
    <button aria-label="Task view"><svg viewBox="0 0 28 28"><path d="M6 7v3h10V7M6 21v-3h10v3M6 12h10v5H6zM20 6v4M20 15v7" fill="none" stroke="#fff"/><path d="M19 11h3v3h-3z" fill="#fff"/></svg></button>
    <button aria-label="Snipping Tool"><svg><use href="#snip"/></svg></button>
    <button class="open" aria-label="Chrome"><svg viewBox="0 0 28 28"><circle cx="13" cy="14" r="12" fill="#2ba24c"/><path d="M2.600 8A12 12 0 0 1 24 9H13L8 17z" fill="#e33b2e"/><path d="M13 26a12 12 0 0 0 11-17H13l5 7z" fill="#fcc934"/><circle cx="13" cy="14" r="5.500" fill="#1a73e8" stroke="#fff" stroke-width="1.500"/><circle cx="20" cy="20" r="7.500" fill="#d2e3fc"/><circle cx="20" cy="18" r="2.500" fill="#1a57c8"/><path d="M15 24c1-4 9-4 10 0z" fill="#1a57c8"/></svg></button>
    <button class="open" aria-label="Edge"><svg viewBox="0 0 28 28"><circle cx="14" cy="14" r="12" fill="url(#ge)"/><path d="M2 14C4 7 14 6 15 12c-3 1-4 4-2 7 3 4 9 3 12 1-4 7-14 8-19 2-3-3-3-8 0-11z" fill="#0d5fb5"/><path d="M14 13c4 0 3 4 2 5 3 2 8 0 9-3-1 8-10 7-12 3-1-2 0-4 1-5z" fill="#101010"/></svg></button>
    <button aria-label="Word"><svg viewBox="0 0 28 28"><path d="M14 5h11v18H14z" fill="#fff" stroke="#2b579a"/><path d="M17 9h7M17 12h7M17 15h7M17 18h7" stroke="#2b579a"/><path d="M3 5l13-3v24L3 23z" fill="#2b579a"/><text x="4" y="18" class="glyph">W</text></svg></button>
    <button aria-label="Snip and Sketch"><svg viewBox="0 0 28 28"><path d="M13 4c9-3 12 8 6 14M11 4C4 4 3 12 8 13" fill="none" stroke="#d2481d" stroke-width="4"/><path d="M13 1v17M17 7l-5 11" stroke="#ccc" stroke-width="2.500"/><circle cx="9" cy="22" r="3" fill="none" stroke="#2b9be6" stroke-width="2"/><circle cx="17" cy="23" r="3" fill="none" stroke="#2b9be6" stroke-width="2"/></svg></button>
    <button class="open multi" aria-label="File Explorer"><svg viewBox="0 0 28 28"><path d="M3 5h9l2 2h11v17H3z" fill="#d9a514"/><path d="M3 8h22v16H3z" fill="#ffd96a"/><path d="M7 25v-8h14v8h-4v-4h-6v4z" fill="#2d8fdd"/></svg></button>
    <button aria-label="Excel"><svg viewBox="0 0 28 28"><path d="M14 5h11v18H14z" fill="#fff" stroke="#217346"/><path d="M16 9h8M16 12h8M16 15h8M16 18h8M20 6v16" stroke="#217346"/><path d="M3 5l13-3v24L3 23z" fill="#217346"/><text x="6" y="18" class="glyph">X</text></svg></button>
    <button class="open active" aria-label="SOLIDWORKS 2018"><svg viewBox="0 0 28 28"><path d="M3 6l12-5 10 3v14l-11 6-11-4z" fill="#c4161c"/><path d="M3 6l12-5 10 3-10 5z" fill="#e8383d"/><text x="4" y="17" class="glyph">SW</text><text x="7" y="27" class="glyph year">2018</text></svg></button>
  </div>
  <div class="tray">
    <svg width="14" height="14" viewBox="0 0 14 14"><path d="M1 10l6-6 6 6"/></svg>
    <svg width="18" height="16" viewBox="0 0 18 16"><path d="M5 3h12v9H5M9 12v3M6 15h8M1 1h5v4H1zM3 5v6"/></svg>
    <svg width="14" height="18" viewBox="0 0 14 18"><path d="M2 5h7v8H2zM9 8l4-2v6l-4-2M3 2c2-1 5-1 7 0M3 16c2 1 5 1 7 0"/></svg>
    <svg width="18" height="16" viewBox="0 0 18 16"><path d="M1 6h3l4-4v12l-4-4H1zM10 6v4M12 4c2 2 2 6 0 8M15 2c3 3 3 9 0 12"/></svg>
    <span>ENG</span>
    <time>17:08<br>07-11-2024</time>
    <svg width="18" height="18" viewBox="0 0 18 18"><path d="M1 1h15v9h-3l-4 4H1z" fill="#fff"/><path d="M3 4h11M3 7h11M3 10h6" stroke="#111"/><path d="M15 9c-2 4-4 5-6 5 3 4 8 2 8-2z" fill="#fff"/></svg>
    <i></i>
  </div>
</div>
</body>
</html>
```

FILE: styles.css
```css
* { box-sizing: border-box; }
html, body { height: 100%; }
body {
  margin: 0; display: flex; flex-direction: column; overflow: hidden;
  font: 11px/13px "Open Sans", "Noto Sans", sans-serif; color: #111; background: #f7f7f7;
}
button, input { font: inherit; color: inherit; border: 0; padding: 0; margin: 0; background: none; outline: 0; }
a { color: inherit; text-decoration: none; }
svg { display: block; flex: none; }
.defs { position: absolute; width: 0; height: 0; }
.dot { width: 6px; height: 6px; border-radius: 50%; background: #d4d4d4; border: 1px solid #8c8c8c; }

/* menu bar */
.topbar { height: 5px; flex: none; display: flex; align-items: flex-end; padding-left: 10px; border-bottom: 1px solid #808080; }
.brand {
  width: 189px; height: 10px; margin-bottom: -5px; padding-left: 30px; display: flex; align-items: flex-end; gap: 6px; flex: none; z-index: 1;
  background: linear-gradient(90deg, #fff 70%, #dcdcdc); border: 2px solid #999; border-top: 0; overflow: hidden;
  font-size: 20px; line-height: 20px; color: #d8232a;
}
.brand svg { margin-bottom: 2px; }
.menu { display: flex; gap: 17px; margin-left: 29px; height: 4px; overflow: hidden; align-items: flex-end; }
.menu a { line-height: 16px; margin-bottom: -5px; }
.menu svg { margin-left: 14px; }
.progress { width: 300px; height: 1px; background: #ddd; align-self: flex-start; margin-left: 190px; }
.progress i { display: block; width: 48px; height: 1px; background: #cdb62b; }
.filesearch { margin-left: auto; margin-right: 207px; width: 202px; height: 4px; display: flex; align-items: flex-end; gap: 8px; overflow: hidden; padding-left: 6px; border: 1px solid #222; border-width: 0 1px; }
.filesearch svg { margin-bottom: -3px; }
.filesearch input { width: 144px; height: 16px; margin-bottom: -5px; background: #e9edf4; }
.filesearch i { width: 12px; height: 4px; border: 1px solid #9fb4d0; border-width: 0 1px; }

/* command ribbon */
.ribbon { height: 123px; flex: none; display: flex; padding: 6px 0 2px 3px; border-bottom: 1px solid #808080; }
.ribbon .sep { width: 1px; margin: 0 1px; background: #c4c4c4; }
.cmd { display: flex; flex-direction: column; align-items: center; padding: 14px 5px 0; min-width: 42px; }
.cmd svg { width: 30px; height: 28px; margin-bottom: 2px; }
.cmd.drop { padding-top: 7px; }
.cmd.drop::after { content: ""; margin: auto 0 9px; border: 4px solid transparent; border-top-color: #333; border-bottom: 0; }
.cmd.off { color: #b9b9b9; }
.cmd.on { background: #b0b0b0; border: 1px solid #666; padding: 13px 4px 0; }

/* workspace */
.work { flex: 1; min-height: 0; display: grid; grid-template: 22px 1fr / 230px 1fr; }
.tabs { grid-area: 1 / 1 / 2 / 3; z-index: 1; justify-self: start; display: flex; line-height: 22px; border-bottom: 1px solid #808080; }
.tabs a { padding: 0 9px; height: 21px; background: #d4d4d4; border-right: 1px solid #808080; color: #222; }
.tabs .cur { background: #f7f7f7; font-weight: 700; padding: 0 7px; }

.panel { grid-area: 2 / 1; display: flex; flex-direction: column; min-height: 0; border-right: 1px solid #808080; padding: 2px 2px 1px 0; }
.grip { height: 16px; margin-bottom: 4px; flex: none; border: 1px solid #c4c4c4; border-width: 1px 0; display: flex; align-items: center; justify-content: center; }
.ptabs { height: 38px; flex: none; display: flex; overflow: hidden; position: relative; border-top: 1px solid #808080; }
.ptabs > button { width: 52px; flex: none; display: flex; align-items: center; justify-content: center; background: #d4d4d4; border: 1px solid #808080; border-width: 0 1px 1px 0; }
.ptabs > .cur { background: #f7f7f7; border-bottom: 0; }
.ptabs svg { width: 28px; height: 28px; }
.pscroll { position: absolute; right: 0; bottom: 0; display: flex; }
.pscroll button { background: #f0f0f0; border: 1px solid #aaa; }
.pscroll svg { width: 16px; height: 18px; }
.filter { height: 26px; flex: none; margin: 1px 0 0 3px; padding-left: 2px; text-align: left; border: 1px solid #c4c4c4; }
.treebox { flex: 1; min-height: 0; display: flex; }
.tree { flex: 1; min-width: 0; overflow: hidden; margin: 0; padding: 0; list-style: none; font-family: "Noto Sans", sans-serif; }
.tree li { height: 22px; display: flex; align-items: center; white-space: pre; }
.tree li::before { content: ""; margin-left: 8px; border: 4px solid transparent; border-left-color: #555; border-right: 0; }
.tree svg { width: 18px; height: 18px; margin: 0 4px 0 14px; }
.vbar { width: 14px; display: flex; flex-direction: column; background: #f0f0f0; }
.vbar svg, .hbar svg { fill: none; stroke: #444; stroke-width: 2; width: 16px; height: 16px; }
.vbar svg { width: 14px; }
.vbar .before { flex: 207; }
.vbar .thumb { flex: 497; background: #cdcdcd; }
.vbar .after { flex: 16; }
.hbar { height: 17px; flex: none; display: flex; background: #f0f0f0; border-bottom: 1px solid #c4c4c4; padding-right: 14px; }
.hbar .thumb { width: 91px; background: #cdcdcd; }
.hbar .end { margin-left: auto; }

.view { grid-area: 1 / 2 / 3 / 3; position: relative; background: #fff; display: flex; align-items: center; justify-content: center; min-height: 0; padding-left: 2px; }
.model { overflow: visible; }
.headsup { position: absolute; top: 5px; left: 0; right: 5px; display: flex; justify-content: center; }
.headsup button { height: 32px; padding: 0 5px; display: flex; align-items: center; }
.headsup svg { width: 28px; height: 28px; }
.headsup .more::after { content: ""; margin: 2px 0 0 8px; border: 3px solid transparent; border-top: 4px solid #aaa; border-bottom: 0; }
.winctl { position: absolute; top: 9px; right: 14px; display: flex; gap: 16px; }
.winctl svg { width: 22px; height: 24px; fill: none; stroke: #a4a4a4; stroke-width: 1; }
.taskpane { position: absolute; top: 88px; right: 0; display: flex; flex-direction: column; border: 1px solid #808080; border-width: 1px 0 0 1px; }
.taskpane button { width: 38px; height: 36px; display: flex; align-items: center; justify-content: center; background: #d4d4d4; border-bottom: 1px solid #808080; }
.taskpane button:first-child { height: 35px; }
.taskpane .cur { background: #fafafa; }
.taskpane svg { width: 28px; height: 28px; }
.taskpane .wide { width: 32px; }
.splitter { position: absolute; left: -1px; top: calc(50% - 20px); width: 9px; height: 39px; background: #f7f7f7; border: 1px solid #808080; border-left: 0; display: flex; align-items: center; }
.corner { position: absolute; left: 12px; bottom: 1px; display: grid; grid-template-columns: 60px auto; }
.corner b { grid-column: 1 / 3; margin-top: 34px; font-size: 12px; line-height: 16px; }
.corner .xaxis { align-self: end; color: #f22; line-height: 14px; }

/* model tabs */
.sheets { height: 16px; flex: none; display: flex; padding-left: 27px; border: 1px solid #808080; border-width: 1px 0; line-height: 13px; }
.steps { display: flex; background: #999; }
.steps button { border: 1px solid #888; background: #b0b0b0; width: 16px; }
.steps svg { width: 14px; height: 12px; fill: #888; stroke: #888; }
.sheets a { padding: 0 10px; background: #d4d4d4; border-right: 1px solid #808080; }
.sheets .cur { background: #f7f7f7; font-weight: 700; padding: 0 9px 0 13px; }
.sheets a:last-child { padding-right: 16px; }

/* status bar */
.status { height: 18px; flex: none; display: flex; align-items: center; padding: 0 2px 0 1px; line-height: 16px; }
.status .defined { margin-left: auto; padding-right: 6px; }
.status .blank { width: 17px; height: 16px; border: 1px solid #c9c9c9; border-width: 0 1px; }
.status .narrow { width: 9px; }
.status .editing { padding: 0 6px 0 4px; }
.status .units { display: flex; align-items: center; gap: 18px; padding: 0 67px 0 34px; }

/* system taskbar */
.taskbar { height: 40px; flex: none; display: flex; align-items: stretch; background: #101010; color: #fff; }
.start { width: 48px; display: flex; align-items: center; justify-content: center; }
.find { width: 287px; display: flex; align-items: center; padding: 0 4px 0 12px; background: #f2f2f2; border: 1px solid #bbb; color: #333; }
.find input { flex: 1; min-width: 0; padding-left: 9px; font-size: 14px; line-height: 20px; }
.find input::placeholder, .filesearch input::placeholder { color: #444; opacity: 1; }
.apps { display: flex; margin-left: 1px; }
.apps button { width: 49px; padding: 2px 4px 0; display: flex; flex-direction: column; align-items: center; justify-content: center; }
.apps svg { width: 28px; height: 28px; }
.apps .open { background: linear-gradient(#fdf0b0, #fdf0b0) 50% 100% / 40px 2px no-repeat; }
.apps .multi { background: linear-gradient(90deg, #fdf0b0 78%, #b8af84 78%) 50% 100% / 40px 2px no-repeat; }
.apps .active { background: linear-gradient(#fdf0b0, #fdf0b0) 50% 100% / 48px 2px no-repeat, #333; }
.glyph { font: 700 10px "Open Sans", sans-serif; fill: #fff; }
.year { font-size: 8px; }
.tray { margin-left: auto; display: flex; align-items: center; font-size: 11px; line-height: 18px; }
.tray svg { fill: none; stroke: #fff; margin-right: 9px; }
.tray time { text-align: center; margin: 0 17px 0 14px; }
.tray i { width: 1px; height: 40px; margin: 0 4px 0 10px; background: #555; }
```
